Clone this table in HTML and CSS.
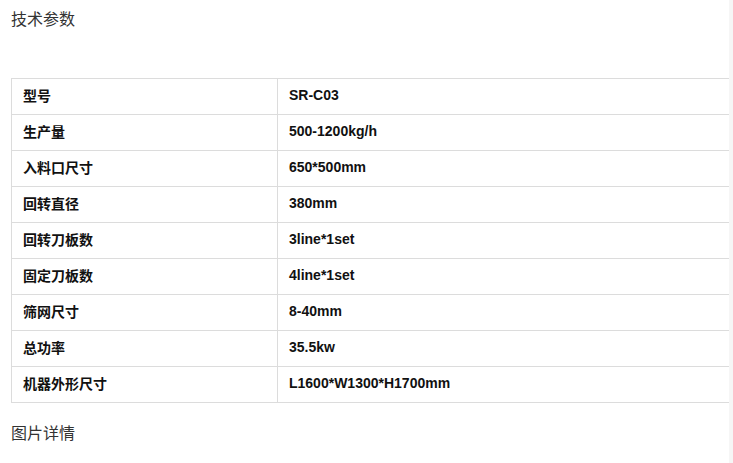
FILE: index.html
```html
<!DOCTYPE html>
<html lang="zh-CN">
<head>
<meta charset="utf-8">
<link rel="stylesheet" href="styles.css">
</head>
<body>
<div class="page">
  <h2 class="section-title">技术参数</h2>
  <table class="spec">
    <tr><td class="k">型号</td><td class="v">SR-C03</td></tr>
    <tr><td class="k">生产量</td><td class="v">500-1200kg/h</td></tr>
    <tr><td class="k">入料口尺寸</td><td class="v">650*500mm</td></tr>
    <tr><td class="k">回转直径</td><td class="v">380mm</td></tr>
    <tr><td class="k">回转刀板数</td><td class="v">3line*1set</td></tr>
    <tr><td class="k">固定刀板数</td><td class="v">4line*1set</td></tr>
    <tr><td class="k">筛网尺寸</td><td class="v">8-40mm</td></tr>
    <tr><td class="k">总功率</td><td class="v">35.5kw</td></tr>
    <tr><td class="k">机器外形尺寸</td><td class="v">L1600*W1300*H1700mm</td></tr>
  </table>
  <h2 class="section-title second">图片详情</h2>
</div>
</body>
</html>
```
FILE: styles.css
```css
html, body {
  margin: 0;
  padding: 0;
  background: #fff;
}
body {
  font-family: "Liberation Sans", Arial, "Noto Sans CJK SC", sans-serif;
  color: #222;
}
.page {
  padding: 8px 0 0 11px;
  width: 718px;
  border-right: 4px solid #f6f6f6;
  min-height: 455px;
}
.section-title {
  margin: 0;
  font-size: 16px;
  font-weight: normal;
  line-height: 20px;
  color: #333;
  font-family: "Noto Sans CJK SC", sans-serif;
}
.section-title.second {
  margin-top: 19px;
}
.spec {
  margin-top: 50px;
  width: 718px;
  border-collapse: collapse;
  font-size: 14px;
  font-weight: bold;
  color: #111;
}
.spec td {
  border: 1px solid #dcdcdc;
  height: 36px;
  padding: 0 11px 3px;
  box-sizing: border-box;
  vertical-align: middle;
  line-height: 18px;
}
.spec td.k {
  width: 266px;
  font-family: "Noto Sans CJK SC", sans-serif;
}
.spec td.v {
  font-family: "Liberation Sans", Arial, sans-serif;
}
.spec tr td:last-child {
  border-right: none;
}
```
